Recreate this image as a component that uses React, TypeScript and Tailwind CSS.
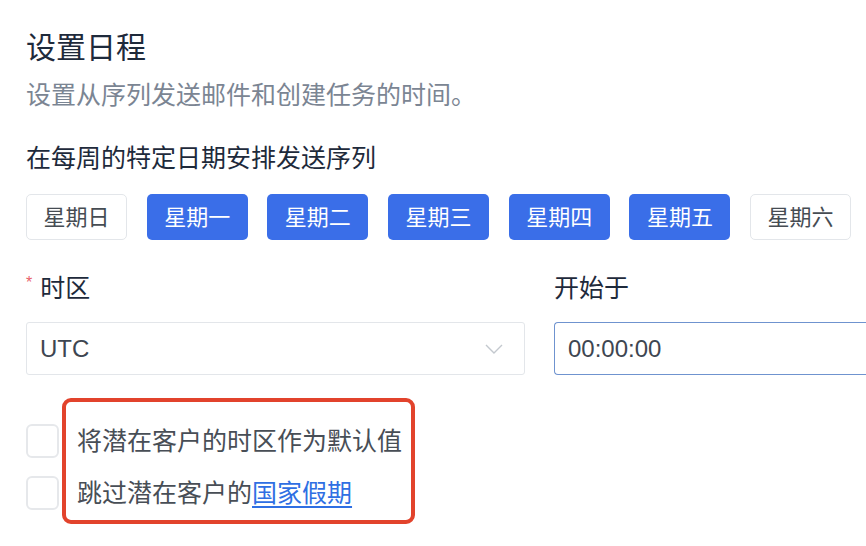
const days = [
  { label: "星期日", on: false },
  { label: "星期一", on: true },
  { label: "星期二", on: true },
  { label: "星期三", on: true },
  { label: "星期四", on: true },
  { label: "星期五", on: true },
  { label: "星期六", on: false },
];

function Checkbox() {
  return <span className="h-[34px] w-[33px] shrink-0 rounded-[6px] border-2 border-[#e6e8eb] bg-white" />;
}

export default function App() {
  return (
    <div
      className="h-[546px] w-[866px] overflow-hidden bg-white pl-[26px] pt-[28px]"
      style={{ fontFamily: '"Liberation Sans", "Noto Sans CJK SC", sans-serif' }}
    >
      <h1 className="text-[30px] leading-[40px] text-[#1e2a3b]">设置日程</h1>
      <p className="mt-[11px] text-[25px] leading-[32px] text-[#7b8593]">设置从序列发送邮件和创建任务的时间。</p>

      <h2 className="mt-[31px] text-[25px] leading-[32px] text-[#1e2a3b]">在每周的特定日期安排发送序列</h2>
      <div className="mt-[20px] flex gap-[19.7px]">
        {days.map((d) =>
          d.on ? (
            <button
              key={d.label}
              className="h-[46px] w-[101px] rounded-[5px] bg-[#3a6ee8] text-[22px] text-white"
            >
              {d.label}
            </button>
          ) : (
            <button
              key={d.label}
              className="h-[46px] w-[101px] rounded-[5px] border border-[#e3e6ea] bg-white text-[22px] text-[#464c53]"
            >
              {d.label}
            </button>
          )
        )}
      </div>

      <div className="mt-[32px] flex gap-[29px]">
        <div className="w-[499px] shrink-0">
          <div className="flex items-start text-[25px] leading-[32px] text-[#1e2a3b]">
            <span className="mr-[8px] mt-[2px] text-[16px] leading-[18px] text-[#e8606a]">*</span>
            时区
          </div>
          <div className="mt-[18px] flex h-[53px] items-center justify-between rounded-[3px] border border-[#e3e6ea] pl-[13px] pr-[21px]">
            <span className="text-[24px] text-[#3e4651]">UTC</span>
            <svg width="18" height="10" viewBox="0 0 18 10" fill="none">
              <path d="M1 1l8 8 8-8" stroke="#c3c8ce" strokeWidth="1.4" />
            </svg>
          </div>
        </div>
        <div className="flex-1">
          <div className="text-[25px] leading-[32px] text-[#1e2a3b]">开始于</div>
          <div className="mt-[18px] flex h-[53px] w-[340px] items-center rounded-l-[4px] border border-r-0 border-[#6f93cf] pl-[13px]">
            <span className="text-[24px] text-[#3e4651]">00:00:00</span>
          </div>
        </div>
      </div>

      <div className="relative mt-[49px] flex w-[400px] flex-col gap-[18px]">
        <label className="flex items-center gap-[18px]">
          <Checkbox />
          <span className="text-[25px] leading-[34px] text-[#484e56]">将潜在客户的时区作为默认值</span>
        </label>
        <label className="flex items-center gap-[18px]">
          <Checkbox />
          <span className="text-[25px] leading-[34px] text-[#484e56]">
            跳过潜在客户的<a className="text-[#2f6fe3] underline underline-offset-[4px]">国家假期</a>
          </span>
        </label>
        <div className="pointer-events-none absolute left-[36px] top-[-26px] h-[126px] w-[353px] rounded-[9px] border-4 border-[#e2432c]" />
      </div>
    </div>
  );
}
